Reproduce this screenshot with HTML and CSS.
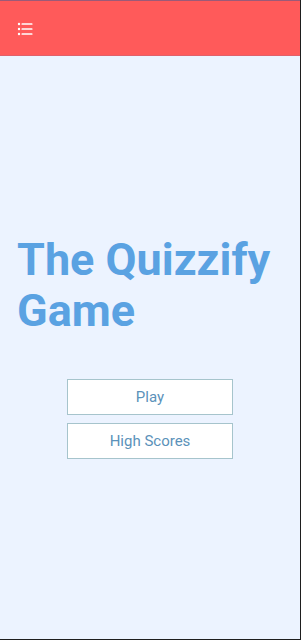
FILE: index.html
```html
<!DOCTYPE html>
<html>
<head>
<meta charset="utf-8">
<link rel="stylesheet" href="styles.css">
</head>
<body>
<div class="app">
  <header class="header">
    <svg class="menu" width="16" height="16" viewBox="0 0 16 16">
      <g fill="#fff">
        <circle cx="2" cy="3" r="1.2"/>
        <circle cx="2" cy="8" r="1.2"/>
        <circle cx="2" cy="13" r="1.2"/>
        <rect x="4.5" y="2.2" width="11" height="1.6" rx="0.6"/>
        <rect x="4.5" y="7.2" width="11" height="1.6" rx="0.6"/>
        <rect x="4.5" y="12.2" width="11" height="1.6" rx="0.6"/>
      </g>
    </svg>
  </header>
  <main class="main">
    <h1 class="title">The Quizzify Game</h1>
    <div class="actions">
      <button class="btn">Play</button>
      <button class="btn">High Scores</button>
    </div>
  </main>
</div>
</body>
</html>
```
FILE: styles.css
```css
html, body {
  margin: 0;
  padding: 0;
}
body {
  font-family: Roboto, "Liberation Sans", sans-serif;
}
.app {
  width: 301px;
  height: 640px;
  box-sizing: border-box;
  border-right: 1px solid #1e1e1e;
  border-bottom: 1px solid #1e1e1e;
  background: #ecf3ff;
  display: flex;
  flex-direction: column;
}
.header {
  height: 56px;
  flex: none;
  box-sizing: border-box;
  background: #ff5a5a;
  border-top: 1px solid #9c5a78;
  border-bottom: 1px solid #e0606a;
  display: flex;
  align-items: center;
  padding-left: 17px;
}
.menu {
  display: block;
  margin-top: 2px;
}
.main {
  display: flex;
  flex-direction: column;
  padding: 178px 17px 0;
}
.title {
  margin: 0;
  font-size: 45px;
  line-height: 51px;
  font-weight: 700;
  color: #5aa2e2;
}
.actions {
  display: flex;
  flex-direction: column;
  align-items: center;
  gap: 8px;
  margin-top: 43px;
}
.btn {
  width: 166px;
  height: 36px;
  box-sizing: border-box;
  background: #fff;
  border: 1px solid #a6c4cc;
  border-radius: 0;
  font-family: Roboto, "Liberation Sans", sans-serif;
  font-size: 15px;
  color: #5b92ba;
  padding: 0;
}
```
